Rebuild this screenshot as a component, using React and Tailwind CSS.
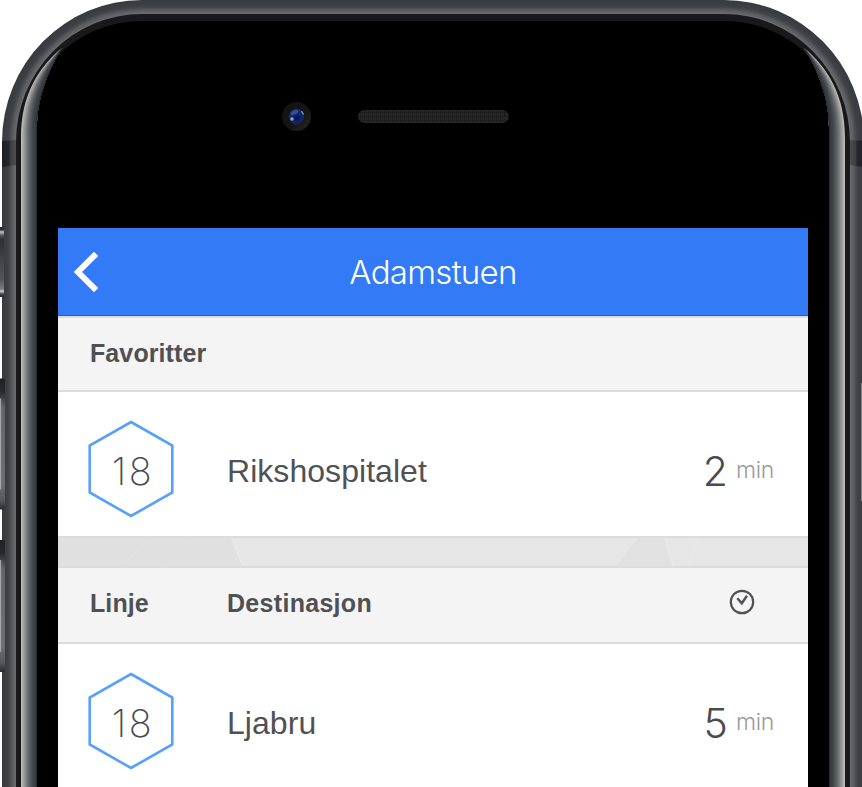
const steps = (n) => Array.from({ length: n }, (_, i) => i);

const mix = (stops, t) => {
  const p = t * (stops.length - 1);
  const i = Math.min(Math.floor(p), stops.length - 2);
  const f = p - i;
  const c = stops[i].map((v, k) => Math.round(v + (stops[i + 1][k] - v) * f));
  return `rgb(${c.join(",")})`;
};

const METAL = [[56, 59, 63], [60, 62, 66], [66, 68, 72], [90, 91, 95], [106, 107, 110]];
const GLINT = [[186, 186, 186], [150, 150, 151], [112, 113, 115], [84, 87, 91], [62, 65, 70], [56, 58, 63]];

const body = (d) =>
  `M${2 + d} 900V${142}A${140 - d} ${142 - d} 0 0 1 142 ${d}H724A${140 - d} ${142 - d} 0 0 1 ${864 - d} 142V900Z`;

const glint = (x) =>
  `M62 48C${38 + (x - 21) * 0.62} ${68 + (x - 21) * 0.1} ${x} 95 ${x} ${138 - (x - 21) * 0.7}V800H${37}V127C37 98 48 70 62 48Z`;

function SideGlint({ mirrored }) {
  return (
    <g transform={mirrored ? "translate(866 0) scale(-1 1)" : undefined}>
      {steps(16).map((i) => (
        <path key={i} d={glint(21 + i)} fill={mix(GLINT, i / 15)} />
      ))}
      <path d="M62 48C48 70 37 98 36.500 127V800" fill="none" stroke="#26282b" strokeWidth="0.8" />
    </g>
  );
}

function SideButton({ y, height, width }) {
  return (
    <g>
      <rect x="-4" y={y} width={width + 4} height={height} rx="1.5" fill="url(#button)" />
      <rect x="0" y={y + 20} width="1.2" height={height - 40} fill="#a2a4a6" />
    </g>
  );
}

function PhoneBody() {
  return (
    <svg className="absolute inset-0" width="862" height="787" viewBox="0 0 862 787">
      <defs>
        <linearGradient id="button" x1="0" x2="0" y1="0" y2="1">
          <stop offset="0" stopColor="#1f2025" />
          <stop offset="0.1" stopColor="#29292e" />
          <stop offset="0.22" stopColor="#626468" />
          <stop offset="0.8" stopColor="#6b6d70" />
          <stop offset="0.93" stopColor="#56585c" />
          <stop offset="1" stopColor="#2a2b2e" />
        </linearGradient>
        <linearGradient id="mute" x1="0" x2="0" y1="0" y2="1">
          <stop offset="0" stopColor="#222" />
          <stop offset="0.04" stopColor="#333" />
          <stop offset="0.07" stopColor="#c4c4c6" />
          <stop offset="0.12" stopColor="#55565a" />
          <stop offset="0.18" stopColor="#2e2f33" />
          <stop offset="0.75" stopColor="#55565a" />
          <stop offset="0.88" stopColor="#77787c" />
          <stop offset="0.92" stopColor="#c4c4c6" />
          <stop offset="0.96" stopColor="#444" />
          <stop offset="1" stopColor="#222" />
        </linearGradient>
        <linearGradient id="band" x1="0" x2="1">
          <stop offset="0" stopColor="#1d2126" />
          <stop offset="0.5" stopColor="#24272c" />
          <stop offset="0.6" stopColor="#3c3e41" />
          <stop offset="1" stopColor="#4d4e51" />
        </linearGradient>
        <radialGradient id="lens" cx="0.55" cy="0.6" r="0.55">
          <stop offset="0" stopColor="#04104f" />
          <stop offset="0.5" stopColor="#10256b" />
          <stop offset="1" stopColor="#1c2c58" />
        </radialGradient>
        <linearGradient id="bezel" x1="0" y1="0" x2="1" y2="1">
          <stop offset="0" stopColor="#111" />
          <stop offset="0.6" stopColor="#161616" />
          <stop offset="1" stopColor="#292929" />
        </linearGradient>
        <pattern id="mesh" width="4" height="4" patternUnits="userSpaceOnUse">
          <rect width="4" height="4" fill="#262626" />
          <path d="M0 0.5H4M0.5 0V4" stroke="#1d1d1d" />
        </pattern>
      </defs>

      {steps(14).map((i) => (
        <path key={i} d={body(i)} fill={mix(METAL, i / 13)} />
      ))}
      <path d="M2 141L16 140V165L2 167Z" fill="url(#band)" />
      <path d="M2 141L16 140V165L2 167Z" fill="url(#band)" transform="translate(866 0) scale(-1 1)" />

      <path d={body(14)} fill="#19191b" />
      <path d="M21 900V142A121 121 0 0 1 142 21H724A121 121 0 0 1 845 142V900Z" fill="#000" />
      <SideGlint />
      <SideGlint mirrored />

      <rect x="-4" y="227" width="8" height="70" rx="1.5" fill="url(#mute)" />
      <SideButton y={378.5} height={131} width={5} />
      <SideButton y={540} height={132} width={5} />
      <rect x="861" y="383" width="3" height="118" fill="#85878a" />

      <circle cx="296.500" cy="116.500" r="14.500" fill="url(#bezel)" />
      <circle cx="296.500" cy="116.500" r="7.700" fill="url(#lens)" />
      <ellipse cx="294.500" cy="112.500" rx="4" ry="2" fill="#3c62b8" opacity="0.7" transform="rotate(-25 294.500 112.500)" />
      <circle cx="292" cy="119" r="1.700" fill="#8fa6cf" />
      <path d="M301.500 111L303.500 114.500" stroke="#5f9bc4" strokeWidth="1.500" />
      <rect x="358" y="110" width="151" height="13" rx="6.500" fill="url(#mesh)" />
    </svg>
  );
}

function Header() {
  return (
    <header className="grid h-[88px] shrink-0 grid-cols-[60px_1fr_60px] items-center border-b border-[#0a62ee] bg-[#337af7] pt-px">
      <svg className="ml-4" width="26" height="42" viewBox="0 0 26 42" fill="none">
        <path d="M22.100 2.800L3.900 21L22.100 39.200" stroke="#fff" strokeWidth="6" />
      </svg>
      <h1 className="text-center font-['Inter'] text-[33px] leading-10 font-light tracking-[-0.7px] text-white">
        Adamstuen
      </h1>
    </header>
  );
}

function SectionBar({ children, className }) {
  return (
    <div
      className={`flex shrink-0 items-center border-y-2 border-[#dcdcdc] bg-[#f4f4f4] pl-8 font-['Liberation_Sans'] text-[25px] leading-8 font-bold tracking-[0.1px] text-[#4f5054] ${className}`}
    >
      {children}
    </div>
  );
}

function Departure({ line, destination, minutes }) {
  return (
    <div className="flex h-[144px] shrink-0 items-center bg-white pt-[10px] pr-[34px] pl-[30px]">
      <div className="grid h-[98px] w-[86px] place-items-center">
        <svg className="col-start-1 row-start-1" width="86" height="98" viewBox="0 0 86 98" fill="none">
          <path d="M43 2L84.300 25.500V72.500L43 96L1.700 72.500V25.500Z" stroke="#57a0fb" strokeWidth="2.600" />
        </svg>
        <span className="col-start-1 row-start-1 pt-[3px] pl-1 font-['Inter'] text-[38px] leading-10 font-extralight tracking-[2.5px] text-[#4a4b4f]">
          {line}
        </span>
      </div>
      <span className="ml-[53px] flex-1 pt-1 font-['Liberation_Sans'] text-[32px] leading-10 tracking-[0.05px] text-[#505155]">
        {destination}
      </span>
      <span className="pt-1 font-['Inter'] text-[41px] leading-10 font-light text-[#4a4b4f]">{minutes}</span>
      <span className="ml-2 pt-[2px] font-['Inter'] text-[23px] leading-10 font-light tracking-[-0.3px] text-[#9a9a9c]">min</span>
    </div>
  );
}

function Gap() {
  return (
    <svg className="block shrink-0" width="750" height="28" viewBox="0 0 750 28">
      <rect width="750" height="28" fill="#e6e6e6" />
      <path d="M0 0H174L185 28H0Z" fill="#e0e0e0" />
      <path d="M93 0L64 28M134 0L108 28" stroke="#e3e3e3" />
      <path d="M174 0L185 28" stroke="#e8e8e8" strokeWidth="2" />
      <path d="M580 0H607L615 28H558Z" fill="#e1e1e1" />
      <path d="M607 0L615 28M640 0L630 28" stroke="#e8e8e8" strokeWidth="2" />
    </svg>
  );
}

export default function App() {
  return (
    <div className="relative h-[787px] w-[862px] overflow-hidden bg-white">
      <PhoneBody />
      <main className="relative mt-[228px] ml-[58px] flex h-[559px] w-[750px] flex-col overflow-hidden bg-white">
        <Header />
        <SectionBar className="h-[76px] pb-[2px]">Favoritter</SectionBar>
        <Departure line="18" destination="Rikshospitalet" minutes="2" />
        <div className="shrink-0 border-t-2 border-[#dcdcdc]">
          <Gap />
        </div>
        <SectionBar className="h-[78px] pr-[53px] pb-[5px]">
          <span className="w-[137px]">Linje</span>
          <span className="flex-1 tracking-[0.3px]">Destinasjon</span>
          <svg className="-mt-px" width="26" height="26" viewBox="0 0 26 26" fill="none" stroke="#4f5054">
            <circle cx="13" cy="13" r="11.200" strokeWidth="2.200" />
            <path d="M8.300 9.300L12.800 14.300L18 6.800" strokeWidth="2.400" />
          </svg>
        </SectionBar>
        <Departure line="18" destination="Ljabru" minutes="5" />
      </main>
    </div>
  );
}
